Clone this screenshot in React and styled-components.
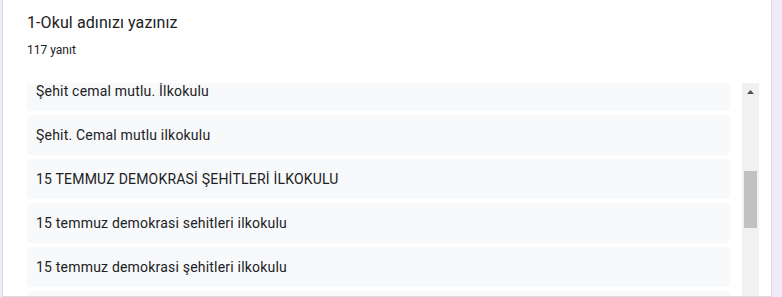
import React, { useLayoutEffect, useRef } from 'react'
import styled, { createGlobalStyle } from 'styled-components'

const GlobalStyle = createGlobalStyle`
  html, body {
    margin: 0;
    padding: 0;
    background: #f0ebf8;
    overflow: hidden;
  }
  body {
    font-family: Roboto, "Liberation Sans", Arial, sans-serif;
    color: #202124;
  }
`

const Page = styled.div`
  height: 297px;
  padding-left: 2px;
  width: 770px;
`

const Card = styled.section`
  height: 297px;
  background: #fff;
  border: 1px solid #dadce0;
  border-top: none;
  box-sizing: border-box;
  display: flex;
  flex-direction: column;
  padding: 11px 12px 0 24px;
  overflow: hidden;
`

const Title = styled.h2`
  margin: 0;
  font-size: 16px;
  font-weight: 400;
  line-height: 24px;
  letter-spacing: 0.1px;
  color: #202124;
`

const Count = styled.div`
  margin-top: 7px;
  font-size: 12px;
  line-height: 16px;
  color: #202124;
`

const Body = styled.div`
  margin-top: 25px;
  flex: 1;
  display: flex;
  gap: 12px;
  min-height: 0;
`

const List = styled.div`
  flex: 1;
  overflow: hidden;
  display: flex;
  flex-direction: column;
  gap: 4px;
`

const Row = styled.div`
  flex: 0 0 40px;
  display: flex;
  align-items: center;
  padding: 0 9px;
  background: #f8f9fa;
  border-radius: 4px;
  font-size: 14px;
  letter-spacing: 0.2px;
  color: #202124;
`

const Scrollbar = styled.div`
  width: 17px;
  flex: 0 0 17px;
  background: #f1f1f1;
  display: flex;
  flex-direction: column;
  align-items: center;
`

const ArrowButton = styled.div`
  height: 17px;
  width: 17px;
  display: flex;
  align-items: center;
  justify-content: center;
`

const Thumb = styled.div`
  margin-top: 71px;
  width: 13px;
  height: 57px;
  background: #c1c1c1;
`

const answers = [
  'Şehit cemal mutlu. İlkokulu',
  'Şehit. Cemal mutlu ilkokulu',
  '15 TEMMUZ DEMOKRASİ ŞEHİTLERİ İLKOKULU',
  '15 temmuz demokrasi sehitleri ilkokulu',
  '15 temmuz demokrasi şehitleri ilkokulu',
  '',
]

export default function App() {
  const listRef = useRef(null)

  useLayoutEffect(() => {
    // list is scrolled a bit so the first visible answer is cut at the top
    if (listRef.current) listRef.current.scrollTop = 12
  }, [])

  return (
    <Page>
      <GlobalStyle />
      <Card>
        <Title>1-Okul adınızı yazınız</Title>
        <Count>117 yanıt</Count>
        <Body>
          <List ref={listRef}>
            {answers.map((a, i) => (
              <Row key={i}>{a}</Row>
            ))}
          </List>
          <Scrollbar>
            <ArrowButton>
              <svg width="7" height="4" viewBox="0 0 7 4">
                <path d="M3.5 0 L7 4 L0 4 Z" fill="#505050" />
              </svg>
            </ArrowButton>
            <Thumb />
          </Scrollbar>
        </Body>
      </Card>
    </Page>
  )
}
